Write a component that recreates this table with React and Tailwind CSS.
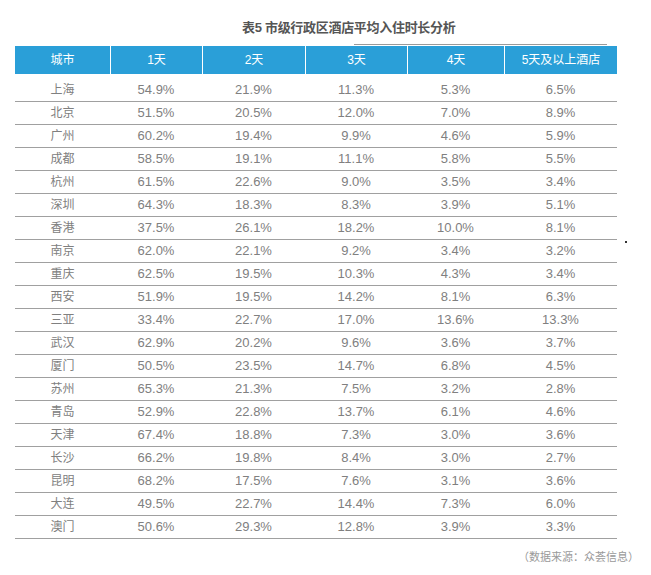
import React from "react";

const cols = ["城市", "1天", "2天", "3天", "4天", "5天及以上酒店"];

const rows = [
  ["上海", "54.9%", "21.9%", "11.3%", "5.3%", "6.5%"],
  ["北京", "51.5%", "20.5%", "12.0%", "7.0%", "8.9%"],
  ["广州", "60.2%", "19.4%", "9.9%", "4.6%", "5.9%"],
  ["成都", "58.5%", "19.1%", "11.1%", "5.8%", "5.5%"],
  ["杭州", "61.5%", "22.6%", "9.0%", "3.5%", "3.4%"],
  ["深圳", "64.3%", "18.3%", "8.3%", "3.9%", "5.1%"],
  ["香港", "37.5%", "26.1%", "18.2%", "10.0%", "8.1%"],
  ["南京", "62.0%", "22.1%", "9.2%", "3.4%", "3.2%"],
  ["重庆", "62.5%", "19.5%", "10.3%", "4.3%", "3.4%"],
  ["西安", "51.9%", "19.5%", "14.2%", "8.1%", "6.3%"],
  ["三亚", "33.4%", "22.7%", "17.0%", "13.6%", "13.3%"],
  ["武汉", "62.9%", "20.2%", "9.6%", "3.6%", "3.7%"],
  ["厦门", "50.5%", "23.5%", "14.7%", "6.8%", "4.5%"],
  ["苏州", "65.3%", "21.3%", "7.5%", "3.2%", "2.8%"],
  ["青岛", "52.9%", "22.8%", "13.7%", "6.1%", "4.6%"],
  ["天津", "67.4%", "18.8%", "7.3%", "3.0%", "3.6%"],
  ["长沙", "66.2%", "19.8%", "8.4%", "3.0%", "2.7%"],
  ["昆明", "68.2%", "17.5%", "7.6%", "3.1%", "3.6%"],
  ["大连", "49.5%", "22.7%", "14.4%", "7.3%", "6.0%"],
  ["澳门", "50.6%", "29.3%", "12.8%", "3.9%", "3.3%"],
];

const grid = "grid grid-cols-[95px_92px_103px_102px_97px_113px]";

function App() {
  return (
    <div
      className="w-[651px] h-[575px] bg-white relative"
      style={{ fontFamily: '"Liberation Sans", "Noto Sans CJK SC", sans-serif' }}
    >
      <div className="pt-[20px] pl-[242px] text-[13px] font-bold text-[#555] leading-[16px] tracking-[-0.3px]">
        表5 市级行政区酒店平均入住时长分析
      </div>
      <div className="ml-[354px] mt-[8px] w-[253px] h-px bg-[#9a9a9a]" />
      <div className="ml-[15px] mt-[1px] w-[602px]">
        <div className={`${grid} h-[28px] bg-[#2a9fd8] text-white text-[12px]`}>
          {cols.map((c, i) => (
            <div
              key={c}
              className={`flex items-center justify-center ${i > 0 ? "border-l border-white" : ""}`}
            >
              {c}
            </div>
          ))}
        </div>
        {rows.map((r, ri) => (
          <div
            key={r[0]}
            className={`${grid} border-b border-[#a0a0a0] text-[13px] text-[#808080] ${
              ri === 0 ? "h-[28px] pt-[5px]" : "h-[23px]"
            }`}
          >
            {r.map((v, i) => (
              <div key={i} className={`flex items-center justify-center ${i === 0 ? "text-[12px]" : ""}`}>
                {v}
              </div>
            ))}
          </div>
        ))}
        <div className="flex justify-end pt-[10px] text-[11px] text-[#9a9a9a] mr-[-22px]">
          （数据来源：众荟信息）
        </div>
      </div>
      <div className="absolute left-[625px] top-[241px] w-[2px] h-[2px] bg-[#333]" />
    </div>
  );
}

export default App;
